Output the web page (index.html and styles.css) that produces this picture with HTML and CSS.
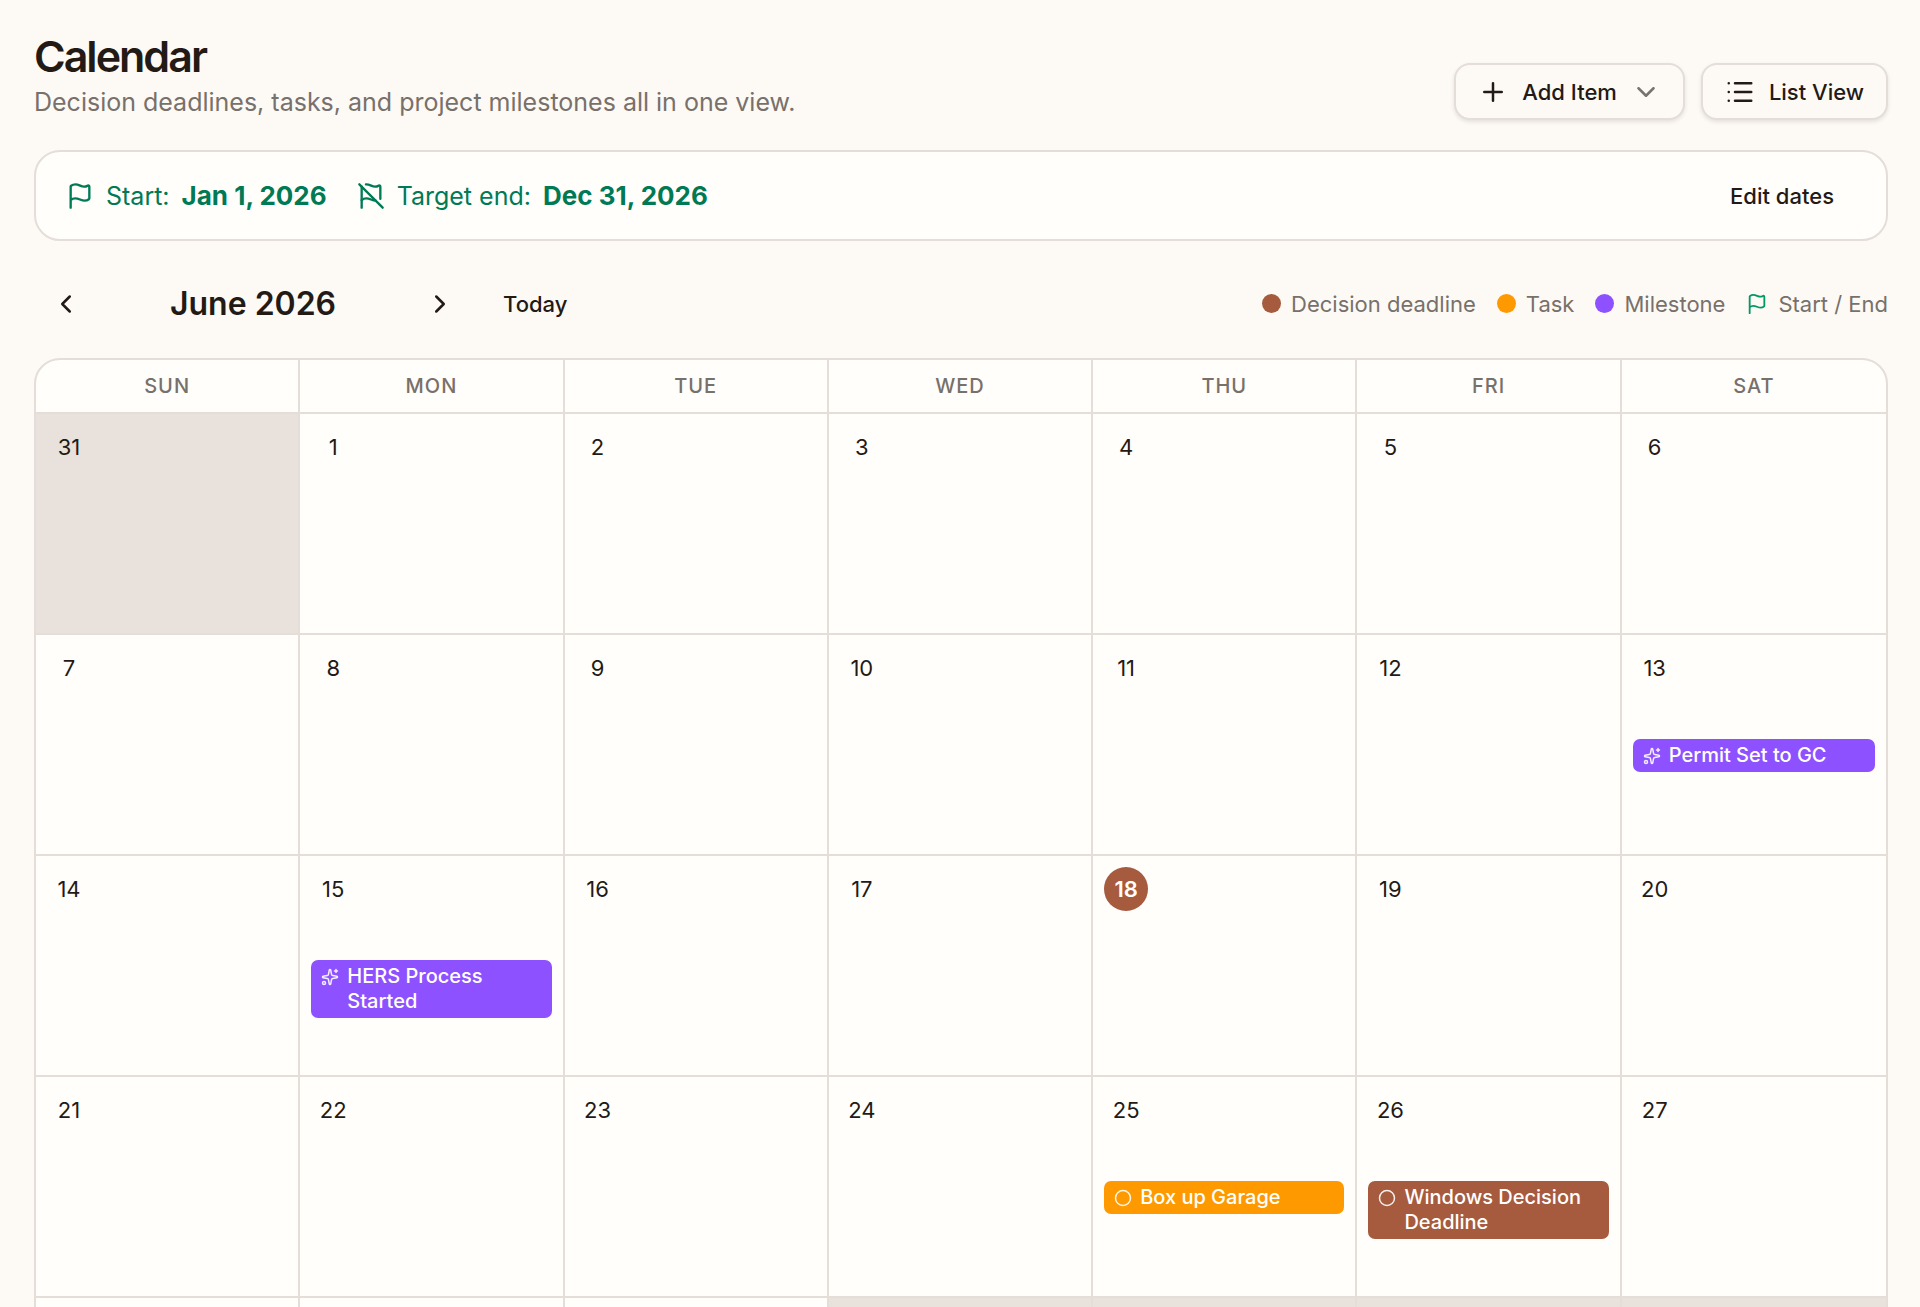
FILE: index.html
```html
<!DOCTYPE html>
<html lang="en">
  <head>
    <meta charset="UTF-8" />
    <meta name="viewport" content="width=device-width, initial-scale=1.0" />
    <title>Calendar</title>
    <link rel="stylesheet" href="styles.css" />
  </head>
  <body>
    <!-- Icon set -->
    <svg class="sprite" aria-hidden="true">
      <symbol id="icon-plus" viewBox="0 0 24 24">
        <path d="M5 12h14M12 5v14" />
      </symbol>
      <symbol id="icon-chevron-down" viewBox="0 0 24 24">
        <path d="m6 9 6 6 6-6" />
      </symbol>
      <symbol id="icon-chevron-left" viewBox="0 0 24 24">
        <path d="m15 18-6-6 6-6" />
      </symbol>
      <symbol id="icon-chevron-right" viewBox="0 0 24 24">
        <path d="m9 18 6-6-6-6" />
      </symbol>
      <symbol id="icon-list" viewBox="0 0 24 24">
        <path d="M3 5h.01M3 12h.01M3 19h.01M8 5h13M8 12h13M8 19h13" />
      </symbol>
      <symbol id="icon-flag" viewBox="0 0 24 24">
        <path
          d="M4 22V4a1 1 0 0 1 .4-.8A6 6 0 0 1 8 2c3 0 5 2 7.333 2q2 0 3.067-.8A1 1 0 0 1 20 4v10a1 1 0 0 1-.4.8A6 6 0 0 1 16 16c-3 0-5-2-8-2a6 6 0 0 0-4 1.528"
        />
      </symbol>
      <symbol id="icon-flag-off" viewBox="0 0 24 24">
        <path d="M16 16c-3 0-5-2-8-2a6 6 0 0 0-4 1.528" />
        <path d="m2 2 20 20" />
        <path d="M4 22V4" />
        <path
          d="M7.656 2H8c3 0 5 2 7.333 2q2 0 3.067-.8A1 1 0 0 1 20 4v10.347"
        />
      </symbol>
      <symbol id="icon-sparkles" viewBox="0 0 24 24">
        <path
          d="M11.017 2.814a1 1 0 0 1 1.966 0l1.051 5.558a2 2 0 0 0 1.594 1.594l5.558 1.051a1 1 0 0 1 0 1.966l-5.558 1.051a2 2 0 0 0-1.594 1.594l-1.051 5.558a1 1 0 0 1-1.966 0l-1.051-5.558a2 2 0 0 0-1.594-1.594l-5.558-1.051a1 1 0 0 1 0-1.966l5.558-1.051a2 2 0 0 0 1.594-1.594z"
        />
        <path d="M20 2v4M22 4h-4" />
        <circle cx="4" cy="20" r="2" />
      </symbol>
      <symbol id="icon-circle" viewBox="0 0 24 24">
        <circle cx="12" cy="12" r="10" />
      </symbol>
    </svg>

    <main class="page">
      <header class="page-header">
        <div>
          <h1>Calendar</h1>
          <p class="subtitle">
            Decision deadlines, tasks, and project milestones all in one view.
          </p>
        </div>
        <div class="header-actions">
          <button type="button" class="btn btn-outline">
            <svg class="icon"><use href="#icon-plus" /></svg>
            Add Item
            <svg class="icon icon-faded"><use href="#icon-chevron-down" /></svg>
          </button>
          <button type="button" class="btn btn-outline">
            <svg class="icon"><use href="#icon-list" /></svg>
            List View
          </button>
        </div>
      </header>

      <section class="dates-card">
        <div class="project-date">
          <svg class="icon"><use href="#icon-flag" /></svg>
          <span>Start:</span>
          <strong>Jan 1, 2026</strong>
        </div>
        <div class="project-date">
          <svg class="icon"><use href="#icon-flag-off" /></svg>
          <span>Target end:</span>
          <strong>Dec 31, 2026</strong>
        </div>
        <button type="button" class="btn edit-dates">Edit dates</button>
      </section>

      <div class="toolbar">
        <div class="month-nav">
          <button type="button" class="btn btn-icon" aria-label="Previous month">
            <svg class="icon"><use href="#icon-chevron-left" /></svg>
          </button>
          <h2>June 2026</h2>
          <button type="button" class="btn btn-icon" aria-label="Next month">
            <svg class="icon"><use href="#icon-chevron-right" /></svg>
          </button>
          <button type="button" class="btn">Today</button>
        </div>
        <ul class="legend">
          <li><span class="dot decision"></span>Decision deadline</li>
          <li><span class="dot task"></span>Task</li>
          <li><span class="dot milestone"></span>Milestone</li>
          <li>
            <svg class="icon legend-flag"><use href="#icon-flag" /></svg>
            Start / End
          </li>
        </ul>
      </div>

      <div class="calendar">
        <table>
          <thead>
            <tr>
              <th>Sun</th>
              <th>Mon</th>
              <th>Tue</th>
              <th>Wed</th>
              <th>Thu</th>
              <th>Fri</th>
              <th>Sat</th>
            </tr>
          </thead>
          <tbody>
            <tr>
              <td class="outside"><span class="day">31</span></td>
              <td><span class="day">1</span></td>
              <td><span class="day">2</span></td>
              <td><span class="day">3</span></td>
              <td><span class="day">4</span></td>
              <td><span class="day">5</span></td>
              <td><span class="day">6</span></td>
            </tr>
            <tr>
              <td><span class="day">7</span></td>
              <td><span class="day">8</span></td>
              <td><span class="day">9</span></td>
              <td><span class="day">10</span></td>
              <td><span class="day">11</span></td>
              <td><span class="day">12</span></td>
              <td>
                <span class="day">13</span>
                <button type="button" class="event milestone">
                  <svg class="icon"><use href="#icon-sparkles" /></svg>
                  <span>Permit Set to GC</span>
                </button>
              </td>
            </tr>
            <tr>
              <td><span class="day">14</span></td>
              <td>
                <span class="day">15</span>
                <button type="button" class="event milestone">
                  <svg class="icon"><use href="#icon-sparkles" /></svg>
                  <span>HERS Process Started</span>
                </button>
              </td>
              <td><span class="day">16</span></td>
              <td><span class="day">17</span></td>
              <td><span class="day today">18</span></td>
              <td><span class="day">19</span></td>
              <td><span class="day">20</span></td>
            </tr>
            <tr>
              <td><span class="day">21</span></td>
              <td><span class="day">22</span></td>
              <td><span class="day">23</span></td>
              <td><span class="day">24</span></td>
              <td>
                <span class="day">25</span>
                <button type="button" class="event task">
                  <svg class="icon"><use href="#icon-circle" /></svg>
                  <span>Box up Garage</span>
                </button>
              </td>
              <td>
                <span class="day">26</span>
                <button type="button" class="event decision">
                  <svg class="icon"><use href="#icon-circle" /></svg>
                  <span>Windows Decision Deadline</span>
                </button>
              </td>
              <td><span class="day">27</span></td>
            </tr>
            <tr>
              <td></td>
              <td></td>
              <td></td>
              <td class="outside"></td>
              <td class="outside"></td>
              <td class="outside"></td>
              <td class="outside"></td>
            </tr>
          </tbody>
        </table>
      </div>
    </main>
  </body>
</html>
```

FILE: styles.css
```css
:root {
  --background: #fdfaf6;
  --card: #fffefb;
  --border: #e4ddd8;
  --outside: #e9e1dc;
  --text: #231a16;
  --muted: #78706a;
  --green: #007a55;
  --brown: #a65a3e;
  --orange: #fe9a00;
  --violet: #8e51ff;
}

* {
  padding: 0;
  margin: 0;
  box-sizing: border-box;
}

body {
  font-family: Inter, "Liberation Sans", sans-serif;
  font-size: 22px;
  line-height: 32px;
  background: var(--background);
  color: var(--text);
}

.sprite {
  display: none;
}

.page {
  height: 100vh;
  overflow: hidden;
  padding: 28px 32px 0 34px;
}

.icon {
  width: 28px;
  height: 28px;
  flex-shrink: 0;
  fill: none;
  stroke: currentColor;
  stroke-width: 2;
  stroke-linecap: round;
  stroke-linejoin: round;
}

/* Buttons */
.btn {
  display: inline-flex;
  align-items: center;
  justify-content: center;
  gap: 14px;
  height: 57px;
  padding: 0 22px;
  border: none;
  border-radius: 16px;
  background: none;
  color: inherit;
  font: inherit;
  font-weight: 500;
  white-space: nowrap;
  cursor: pointer;
}

.btn .icon {
  width: 30px;
  height: 30px;
}

.btn .icon-faded {
  opacity: 0.6;
}

.btn:hover {
  background: var(--outside);
}

.btn-outline {
  border: 2px solid var(--border);
  background: var(--background);
  box-shadow: 0 2px 4px rgba(0, 0, 0, 0.1);
}

.btn-icon {
  width: 64px;
  padding: 0;
}

/* Header */
.page-header {
  display: flex;
  justify-content: space-between;
  align-items: flex-end;
}

h1 {
  font-size: 43px;
  line-height: 56px;
  font-weight: 600;
  letter-spacing: -2px;
}

.subtitle {
  font-size: 25px;
  line-height: 36px;
  color: var(--muted);
}

.header-actions {
  display: flex;
  gap: 16px;
}

/* Project dates */
.dates-card {
  display: flex;
  align-items: center;
  gap: 30px;
  margin-top: 30px;
  padding: 15px 30px;
  border: 2px solid var(--border);
  border-radius: 26px;
  background: var(--card);
}

.project-date {
  display: flex;
  align-items: center;
  gap: 12px;
  font-size: 25px;
  color: var(--green);
}

.project-date strong {
  font-size: 26px;
  font-weight: 700;
}

.edit-dates {
  margin-left: auto;
}

/* Month navigation and legend */
.toolbar {
  display: flex;
  justify-content: space-between;
  align-items: center;
  margin: 34px 0 26px;
}

.month-nav {
  display: flex;
  align-items: center;
  gap: 9px;
}

h2 {
  min-width: 292px;
  font-size: 32px;
  line-height: 40px;
  font-weight: 600;
  text-align: center;
}

.legend {
  display: flex;
  gap: 21px;
  list-style: none;
  color: var(--muted);
}

.legend li {
  display: flex;
  align-items: center;
  gap: 10px;
}

.dot {
  width: 19px;
  height: 19px;
  border-radius: 50%;
}

.legend-flag {
  width: 22px;
  height: 22px;
  color: #009966;
}

.decision {
  background: var(--brown);
}

.task {
  background: var(--orange);
}

.milestone {
  background: var(--violet);
}

/* Calendar grid */
.calendar {
  overflow: hidden;
  border: 2px solid var(--border);
  border-radius: 26px;
  background: var(--card);
}

table {
  width: 100%;
  table-layout: fixed;
  border-collapse: separate;
  border-spacing: 0;
}

th {
  height: 54px;
  border-right: 2px solid var(--border);
  border-bottom: 2px solid var(--border);
  font-size: 20px;
  font-weight: 500;
  letter-spacing: 1px;
  text-transform: uppercase;
  color: var(--muted);
}

td {
  height: 221px;
  padding: 11px;
  border-right: 2px solid var(--border);
  border-bottom: 2px solid var(--border);
  vertical-align: top;
}

th:last-child,
td:last-child {
  border-right: none;
}

.outside {
  background: var(--outside);
}

.day {
  display: flex;
  align-items: center;
  justify-content: center;
  width: 44px;
  height: 44px;
  border-radius: 50%;
}

.today {
  background: var(--brown);
  color: var(--card);
  font-weight: 600;
}

.event {
  display: flex;
  align-items: flex-start;
  gap: 8px;
  width: 100%;
  margin-top: 49px;
  padding: 4px 10px;
  border: none;
  border-radius: 7px;
  color: #fff;
  font: inherit;
  font-size: 20px;
  font-weight: 500;
  line-height: 25px;
  text-align: left;
  cursor: pointer;
}

.event .icon {
  width: 18px;
  height: 18px;
  margin-top: 4px;
  opacity: 0.9;
}
```
